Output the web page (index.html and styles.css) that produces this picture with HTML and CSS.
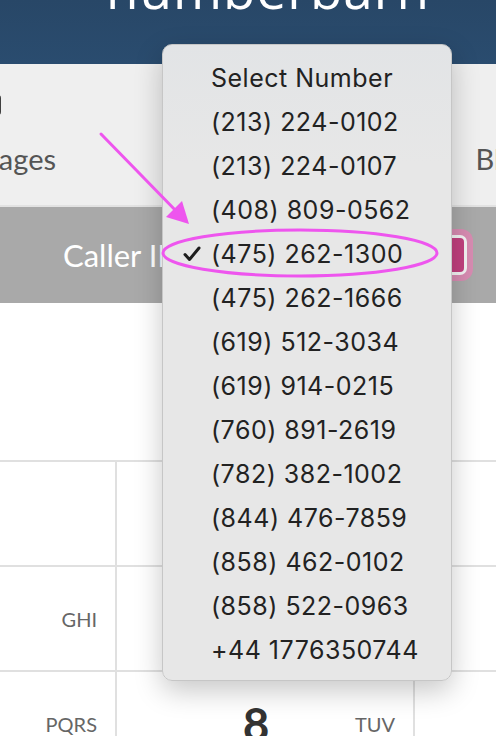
FILE: index.html
```html
<!DOCTYPE html>
<html lang="en">
<head>
  <meta charset="UTF-8" />
  <meta name="viewport" content="width=device-width, initial-scale=1.0"/>
  <title>NumberBarn – Select Number</title>
  <link rel="stylesheet" href="styles.css">
</head>
<body>
  <div class="screen">

    <!-- brand bar -->
    <header class="brand-bar">
      <h1 class="brand">numberbarn</h1>
    </header>

    <!-- tabs -->
    <nav class="tabs">
      <div class="tab">
        <span class="tab-icon"></span>
        <span class="tab-label">Messages</span>
      </div>
      <div class="tab">
        <span class="tab-icon"></span>
        <span class="tab-label">Calls</span>
      </div>
      <div class="tab">
        <span class="tab-icon"></span>
        <span class="tab-label">Blocked</span>
      </div>
    </nav>

    <!-- caller id -->
    <div class="caller-bar">
      <span class="caller-label">Caller ID</span>
      <span class="caller-toggle"><span class="caller-toggle-inner"></span></span>
    </div>

    <div class="dial-display"></div>

    <!-- keypad -->
    <div class="keypad">
      <div class="key"><span class="digit">1</span><span class="letters"></span></div>
      <div class="key"><span class="digit">2</span><span class="letters">ABC</span></div>
      <div class="key"><span class="digit">3</span><span class="letters">DEF</span></div>
      <div class="key"><span class="digit">4</span><span class="letters">GHI</span></div>
      <div class="key"><span class="digit">5</span><span class="letters">JKL</span></div>
      <div class="key"><span class="digit">6</span><span class="letters">MNO</span></div>
      <div class="key"><span class="digit">7</span><span class="letters">PQRS</span></div>
      <div class="key"><span class="digit">8</span><span class="letters">TUV</span></div>
      <div class="key"><span class="digit">9</span><span class="letters">WXYZ</span></div>
    </div>

    <!-- number picker (native select popup) -->
    <ul class="number-menu">
      <li>Select Number</li>
      <li>(213) 224-0102</li>
      <li>(213) 224-0107</li>
      <li>(408) 809-0562</li>
      <li class="checked">
        <svg class="check" viewBox="0 0 18 18" width="18" height="18">
          <path d="M2 9.5 L6.5 14.5 L16 3" fill="none" stroke="#1e1e1e" stroke-width="3" stroke-linecap="round" stroke-linejoin="round"/>
        </svg>
        (475) 262-1300
      </li>
      <li>(475) 262-1666</li>
      <li>(619) 512-3034</li>
      <li>(619) 914-0215</li>
      <li>(760) 891-2619</li>
      <li>(782) 382-1002</li>
      <li>(844) 476-7859</li>
      <li>(858) 462-0102</li>
      <li>(858) 522-0963</li>
      <li>+44 1776350744</li>
    </ul>

    <!-- annotation drawn on top of the screenshot -->
    <svg class="annotation" viewBox="0 0 496 736" width="496" height="736">
      <line x1="101" y1="134" x2="180" y2="215" stroke="#ee55ee" stroke-width="3" stroke-linecap="round"/>
      <polygon points="189,224 166,217 182,201" fill="#ee55ee"/>
      <ellipse cx="300" cy="253" rx="137" ry="23" fill="none" stroke="#ee55ee" stroke-width="3"/>
    </svg>
  </div>
</body>
</html>
```

FILE: styles.css
```css
body {
  margin: 0;
  background: #fff;
  font-family: Lato, "Open Sans", sans-serif;
}
.screen {
  position: relative;
  width: 496px;
  height: 736px;
  overflow: hidden;
}

/* brand */
.brand-bar {
  height: 64px;
  background: linear-gradient(#284767, #2a4c6f);
  overflow: hidden;
}
.brand {
  margin: -39px 0 0;
  padding-left: 40px;
  font-family: "Open Sans", sans-serif;
  font-weight: 400;
  font-size: 53px;
  line-height: 56px;
  color: #fff;
  text-align: center;
  letter-spacing: 1px;
}

/* tabs */
.tabs {
  display: grid;
  grid-template-columns: repeat(3, 266px);
  margin-left: -139px;
  height: 141px;
  background: #efefef;
  border-bottom: 2px solid #e2e2e2;
}
.tab {
  display: flex;
  flex-direction: column;
  align-items: center;
  padding-top: 31px;
}
.tab-icon {
  width: 14px;
  height: 20px;
  border-radius: 3px;
  background: #3f3f3f;
}
.tab-label {
  margin-top: 26px;
  font-size: 29px;
  color: #555;
}

/* caller id */
.caller-bar {
  height: 96px;
  background: #a9a9a9;
  display: flex;
  align-items: center;
  justify-content: space-between;
  padding: 0 23px 0 63px;
}
.caller-label {
  font-size: 31px;
  color: #fff;
}
.caller-toggle {
  padding: 6px;
  border-radius: 12px;
  background: #d88cb2;
}
.caller-toggle-inner {
  display: block;
  width: 30px;
  height: 34px;
  border: 3px solid #f4f4f4;
  border-radius: 7px;
  background: #c2417f;
}

.dial-display {
  height: 157px;
}

/* keypad */
.keypad {
  display: grid;
  grid-template-columns: repeat(3, 298px);
  grid-auto-rows: 105px;
  margin-left: -181px;
  border-top: 2px solid #e0e0e0;
}
.key {
  display: grid;
  grid-template-columns: 1fr auto 1fr;
  align-items: center;
  padding-right: 18px;
  border-right: 2px solid #e0e0e0;
  border-bottom: 2px solid #e0e0e0;
}
.digit {
  grid-column: 2;
  font-size: 46px;
  font-weight: 700;
  color: #333;
}
.letters {
  grid-column: 3;
  justify-self: end;
  font-size: 20px;
  color: #666;
}

/* number popup */
.number-menu {
  position: absolute;
  left: 162px;
  top: 44px;
  width: 288px;
  margin: 0;
  padding: 11px 0 0;
  height: 624px;
  list-style: none;
  background: linear-gradient(#e2e4e6, #e7e7e7 120px);
  border: 1px solid #c6c6c6;
  border-radius: 10px;
  box-shadow: 0 10px 28px rgba(0, 0, 0, 0.22);
  font-family: Inter, "Noto Sans", sans-serif;
}
.number-menu li {
  position: relative;
  height: 44px;
  line-height: 44px;
  padding-left: 48px;
  font-size: 25px;
  letter-spacing: 0.5px;
  color: #222;
}
.check {
  position: absolute;
  left: 20px;
  top: 13px;
}

.annotation {
  position: absolute;
  left: 0;
  top: 0;
  pointer-events: none;
}
```
